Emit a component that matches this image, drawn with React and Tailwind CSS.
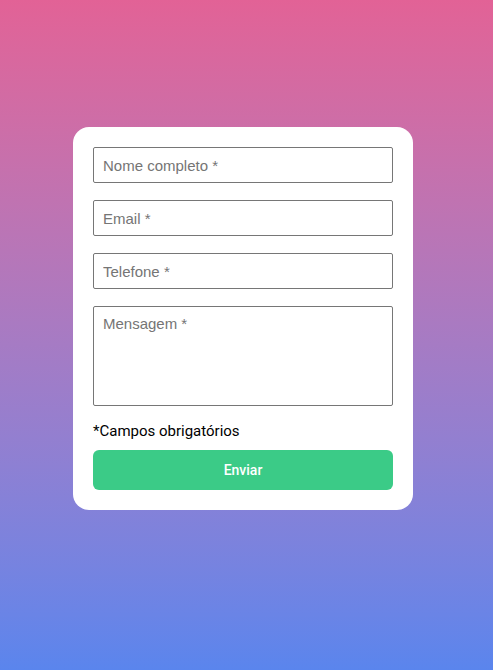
import React from "react";

const fieldClass =
  "block w-full h-[36px] px-[9px] border border-[#767676] rounded-[2px] text-[15px] text-black placeholder:text-[#757575] focus:outline-none";

export default function App() {
  return (
    <div
      className="min-h-[670px] flex justify-center pt-[127px] pr-[7px] bg-gradient-to-b from-[#e26296] to-[#5a85ed]"
      style={{ fontFamily: "Roboto, sans-serif" }}
    >
      <div className="w-[340px] h-[383px] bg-white rounded-[16px] p-5">
        <form onSubmit={(e) => e.preventDefault()}>
          {/* Fields */}
          <div className="flex flex-col gap-[17px]" style={{ fontFamily: "'Liberation Sans', Arial, sans-serif" }}>
            <input type="text" placeholder="Nome completo *" className={fieldClass} />
            <input type="email" placeholder="Email *" className={fieldClass} />
            <input type="tel" placeholder="Telefone *" className={fieldClass} />
            <textarea
              placeholder="Mensagem *"
              className="block w-full h-[100px] px-[9px] py-[6px] border border-[#767676] rounded-[2px] text-[15px] text-black placeholder:text-[#757575] resize-none focus:outline-none"
            />
          </div>

          <p className="mt-[15px] text-[15px] leading-[20px] text-black">*Campos obrigatórios</p>

          {/* Submit */}
          <button
            type="submit"
            className="mt-[9px] w-full h-[40px] rounded-[6px] bg-[#3bcb87] text-white text-[14px] font-medium"
          >
            Enviar
          </button>
        </form>
      </div>
    </div>
  );
}
